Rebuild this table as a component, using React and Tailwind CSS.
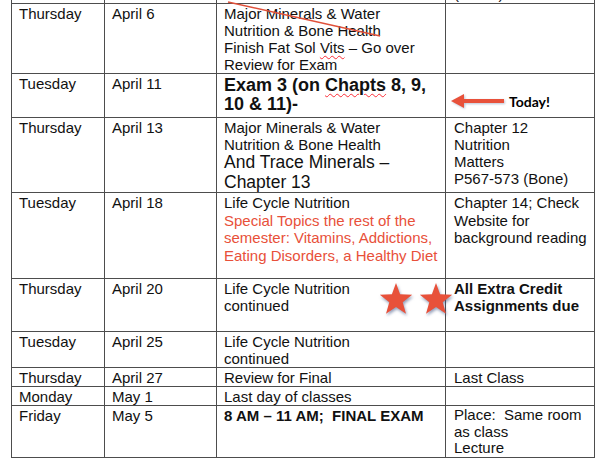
import React from 'react';

const RED = '#e8513a';

const Star = ({ className }) => (
  <svg
    width="34"
    height="34"
    viewBox="0 0 34 34"
    className={`absolute drop-shadow-[1px_2px_1.5px_rgba(60,80,130,0.55)] ${className}`}
  >
    <polygon
      points="17,1 21.1,12.3 33.2,12.8 23.7,20.2 27,31.8 17,25 7,31.8 10.3,20.2 0.8,12.8 12.9,12.3"
      fill={RED}
    />
  </svg>
);

const Lines = ({ items, className = '' }) => (
  <div className={className}>
    {items.map((t, i) => (
      <div key={i} className="whitespace-pre">{t}</div>
    ))}
  </div>
);

const Cell = ({ children, className = '' }) => (
  <td className={`border border-[#4d4d4d] align-top px-[7px] pt-[1px] pb-0 ${className}`}>{children}</td>
);

const App = () => {
  return (
    <div className="relative w-[600px] h-[461px] overflow-hidden bg-white font-['Liberation_Sans',Arial,sans-serif] text-[15px] leading-[17px] text-[#111]">
      <div className="pl-[11px] -mt-[17px]">
        <table className="table-fixed border-collapse w-[583px]">
          <colgroup>
            <col className="w-[93px]" />
            <col className="w-[112px]" />
            <col className="w-[229px]" />
            <col className="w-[149px]" />
          </colgroup>
          <tbody>
            <tr className="h-[20px]">
              <Cell />
              <Cell />
              <Cell />
              <td className="border border-[#4d4d4d] align-bottom px-[8px] pb-[1px] pt-0">(Water)</td>
            </tr>
            <tr className="h-[70px]">
              <Cell>Thursday</Cell>
              <Cell>April 6</Cell>
              <Cell>
                <div>Major Minerals &amp; Water</div>
                <div>Nutrition &amp; Bone Health</div>
                <div className="whitespace-nowrap">
                  Finish Fat Sol{' '}
                  <span className="underline decoration-wavy decoration-red-500 decoration-1 underline-offset-2">Vits</span>{' '}
                  – Go over
                </div>
                <div>Review for Exam</div>
              </Cell>
              <Cell />
            </tr>
            <tr className="h-[44px]">
              <Cell>Tuesday</Cell>
              <Cell>April 11</Cell>
              <Cell className="font-bold text-[18px] leading-[19px] pt-[2px]">
                <div className="whitespace-nowrap">
                  Exam 3 (on{' '}
                  <span className="underline decoration-wavy decoration-red-500 decoration-1 underline-offset-2">Chapts</span>{' '}
                  8, 9,
                </div>
                <div>10 &amp; 11)-</div>
              </Cell>
              <Cell />
            </tr>
            <tr className="h-[75px]">
              <Cell>Thursday</Cell>
              <Cell>April 13</Cell>
              <Cell className="pt-0">
                <div>Major Minerals &amp; Water</div>
                <div>Nutrition &amp; Bone Health</div>
                <div className="text-[17.5px] leading-[19.5px]">And Trace Minerals –</div>
                <div className="text-[17.5px] leading-[19.5px]">Chapter 13</div>
              </Cell>
              <Cell className="px-[8px]">
                <Lines items={['Chapter 12', 'Nutrition', 'Matters', 'P567-573 (Bone)']} />
              </Cell>
            </tr>
            <tr className="h-[86px]">
              <Cell>Tuesday</Cell>
              <Cell>April 18</Cell>
              <Cell className="leading-[17.5px]">
                <div>Life Cycle Nutrition</div>
                <Lines
                  className="text-[#e8503a]"
                  items={[
                    'Special Topics the rest of the',
                    'semester: Vitamins, Addictions,',
                    'Eating Disorders, a Healthy Diet',
                  ]}
                />
              </Cell>
              <Cell className="px-[8px] leading-[17.5px]">
                <Lines items={['Chapter 14; Check', 'Website for', 'background reading']} />
              </Cell>
            </tr>
            <tr className="h-[53px]">
              <Cell>Thursday</Cell>
              <Cell>April 20</Cell>
              <Cell>
                <Lines items={['Life Cycle Nutrition', 'continued']} />
              </Cell>
              <Cell className="px-[8px] font-bold">
                <Lines items={['All Extra Credit', 'Assignments due']} />
              </Cell>
            </tr>
            <tr className="h-[35px]">
              <Cell>Tuesday</Cell>
              <Cell>April 25</Cell>
              <Cell>
                <Lines items={['Life Cycle Nutrition', 'continued']} />
              </Cell>
              <Cell />
            </tr>
            <tr className="h-[19px]">
              <Cell>Thursday</Cell>
              <Cell>April 27</Cell>
              <Cell>Review for Final</Cell>
              <Cell className="px-[8px]">Last Class</Cell>
            </tr>
            <tr className="h-[19px]">
              <Cell>Monday</Cell>
              <Cell>May 1</Cell>
              <Cell>Last day of classes</Cell>
              <Cell />
            </tr>
            <tr className="h-[51px]">
              <Cell>Friday</Cell>
              <Cell>May 5</Cell>
              <Cell className="font-bold whitespace-pre">{'8 AM – 11 AM;  FINAL EXAM'}</Cell>
              <Cell className="px-[8px] pt-0 leading-[16.5px]">
                <Lines items={['Place:  Same room', 'as class', 'Lecture']} />
              </Cell>
            </tr>
          </tbody>
        </table>
      </div>

      {/* red strike-through stroke over the first row */}
      <svg className="absolute left-0 top-0 pointer-events-none" width="600" height="50">
        <line x1="228" y1="2" x2="380" y2="36" stroke="#e0503a" strokeWidth="1.5" />
      </svg>

      {/* today arrow */}
      <svg
        className="absolute left-[450px] top-[93px] drop-shadow-[1px_1px_1px_rgba(60,80,130,0.35)]"
        width="56"
        height="16"
        viewBox="0 0 56 16"
      >
        <line x1="10" y1="8" x2="54" y2="8" stroke={RED} strokeWidth="4" />
        <polygon points="1,8 14,1 14,15" fill={RED} />
      </svg>
      <div className="absolute left-[509px] top-[93px] font-['Lato',sans-serif] font-bold text-[14px] leading-[17px] text-black">
        Today!
      </div>

      <Star className="left-[379px] top-[282px]" />
      <Star className="left-[419px] top-[282px]" />
    </div>
  );
};

export default App;
